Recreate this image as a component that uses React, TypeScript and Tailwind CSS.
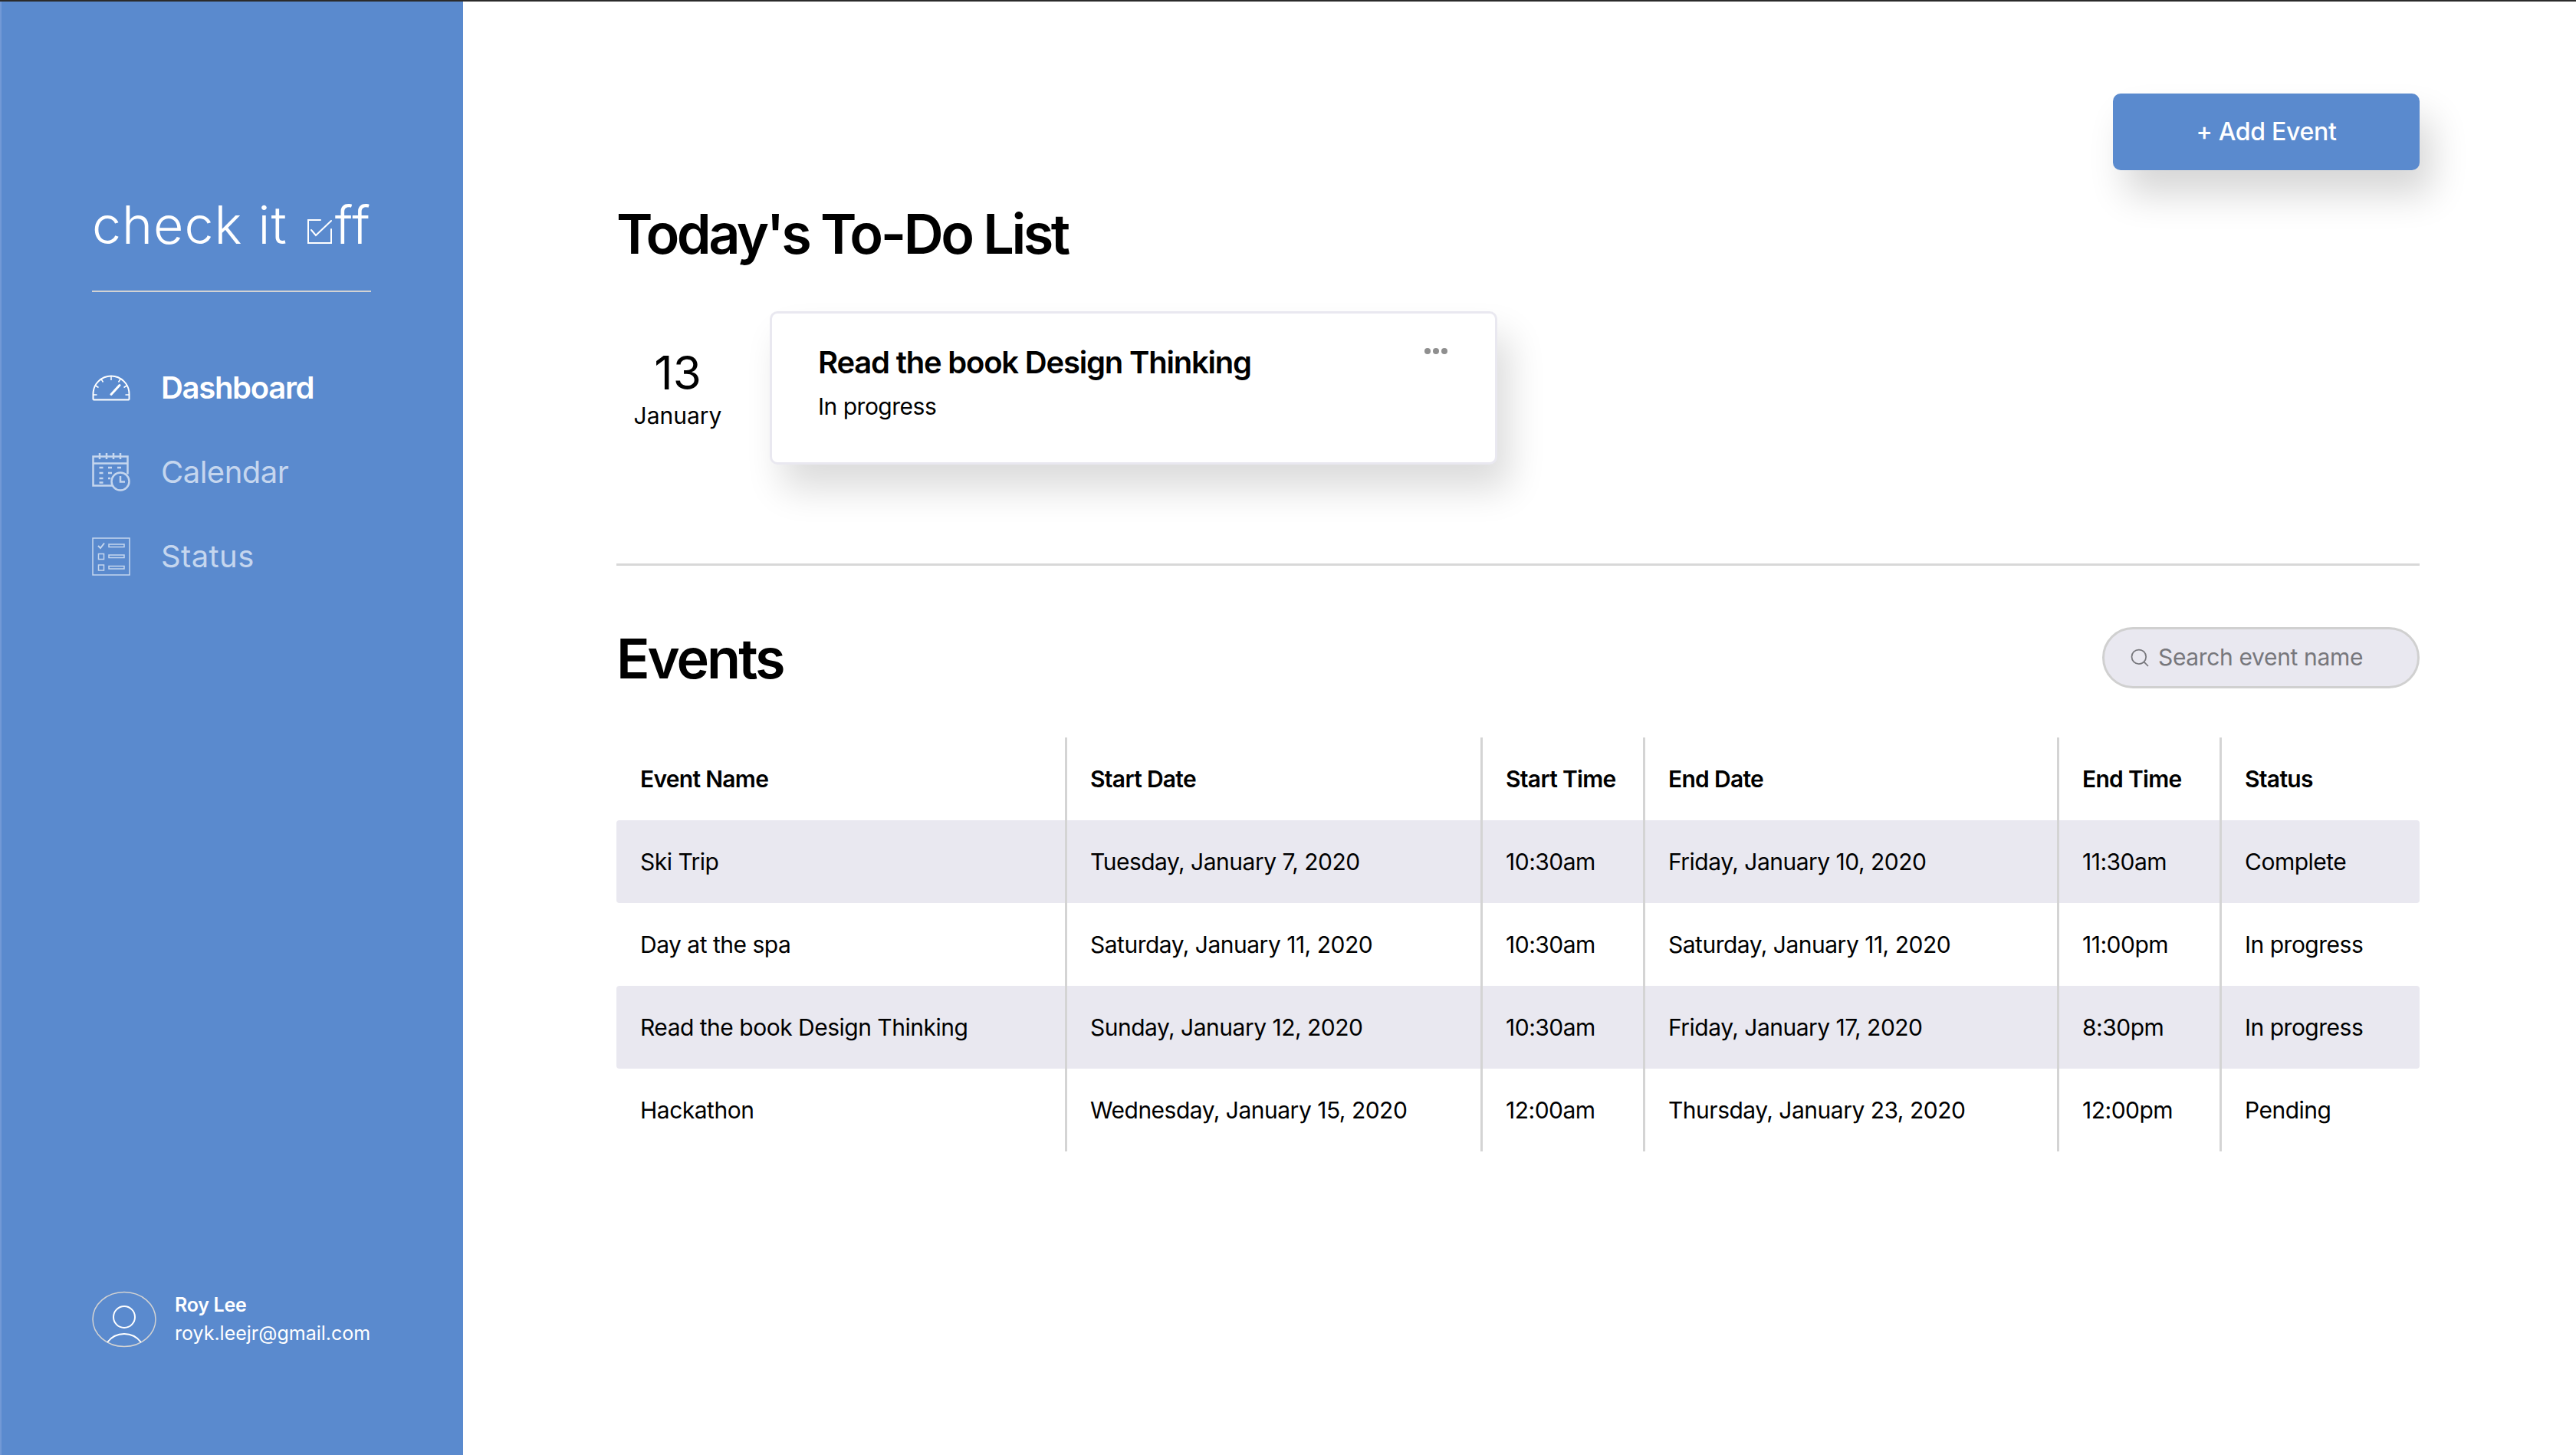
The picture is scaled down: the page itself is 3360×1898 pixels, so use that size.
import { Search } from "lucide-react";

type EventRow = {
  name: string;
  startDate: string;
  startTime: string;
  endDate: string;
  endTime: string;
  status: string;
};

const events: EventRow[] = [
  { name: "Ski Trip", startDate: "Tuesday, January 7, 2020", startTime: "10:30am", endDate: "Friday, January 10, 2020", endTime: "11:30am", status: "Complete" },
  { name: "Day at the spa", startDate: "Saturday, January 11, 2020", startTime: "10:30am", endDate: "Saturday, January 11, 2020", endTime: "11:00pm", status: "In progress" },
  { name: "Read the book Design Thinking", startDate: "Sunday, January 12, 2020", startTime: "10:30am", endDate: "Friday, January 17, 2020", endTime: "8:30pm", status: "In progress" },
  { name: "Hackathon", startDate: "Wednesday, January 15, 2020", startTime: "12:00am", endDate: "Thursday, January 23, 2020", endTime: "12:00pm", status: "Pending" },
];

const headers = ["Event Name", "Start Date", "Start Time", "End Date", "End Time", "Status"];

const GaugeIcon = () => (
  <svg viewBox="0 0 50 34" className="w-[50px] h-[34px]" fill="none" stroke="currentColor" strokeWidth="2">
    <path d="M1.500 32.500h47M1.500 32.500v-7.500a23.500 23.500 0 0 1 47 0v7.500" />
    <path d="M25 2v5M12 5.500l2.500 4M37 5.500l-2.500 4M4.500 14l4 2.500M45.500 14l-4 2.500M1.500 26h5M48.500 26h-5" strokeWidth="1.500" />
    <path d="M25 25.500 36 13.500" strokeWidth="3" strokeLinecap="round" />
  </svg>
);

const CalendarIcon = () => (
  <svg viewBox="0 0 50 50" className="w-[50px] h-[50px]" fill="none" stroke="currentColor" strokeWidth="2.500">
    <path d="M28 42.500H1.500V4.500h45v23" />
    <path d="M1.500 13.500h45" />
    <path d="M10 0v8M19 0v8M28 0v8M37 0v8" />
    <path d="M9.500 19h5M21 19h5M33 19h5M9.500 26h5M21 26h5M9.500 33h5M21 33h3M9.500 38.500h5" strokeWidth="2.500" />
    <circle cx="37" cy="37" r="11.500" fill="#5a8ace" />
    <path d="M37 30v7.500h6" />
  </svg>
);

const ChecklistIcon = () => (
  <svg viewBox="0 0 50 50" className="w-[50px] h-[50px]" fill="none" stroke="currentColor" strokeWidth="1.500">
    <rect x="1" y="1" width="48" height="48" />
    <path d="m8 11 3 3 5-6.500" strokeWidth="2" />
    <rect x="22" y="9" width="20" height="3.500" />
    <rect x="8.500" y="21.500" width="7" height="7" />
    <rect x="22" y="23" width="20" height="3.500" />
    <rect x="8.500" y="36" width="7" height="7" />
    <rect x="22" y="37.500" width="20" height="3.500" />
  </svg>
);

const AvatarIcon = () => (
  <svg viewBox="0 0 84 74" className="w-[84px] h-[74px] shrink-0" fill="none">
    <ellipse cx="42" cy="37" rx="41" ry="35.500" stroke="#d3d3d3" strokeWidth="1.500" />
    <circle cx="42" cy="34" r="14" stroke="#ffffff" strokeWidth="2" />
    <path d="M20 67c6-8 13-11 22-11s16 3 22 11" stroke="#ffffff" strokeWidth="2" />
  </svg>
);

const LogoBox = () => (
  <svg viewBox="0 0 33 33" className="w-[33px] h-[33px] ml-[25px] mr-[4px]" fill="none" stroke="#ffffff" strokeWidth="2" strokeLinecap="round">
    <path d="M18 2H2v30h30V14" />
    <path d="m6 15 6 7L32 3" />
  </svg>
);

const NavItem = ({ icon, label, className }: { icon: React.ReactNode; label: string; className: string }) => (
  <div className={`flex items-center h-[110px] gap-[40px] text-[40px] ${className}`}>
    <span className="w-[50px] flex justify-center">{icon}</span>
    <span>{label}</span>
  </div>
);

export default function App() {
  return (
    <div className="h-[1898px] overflow-hidden bg-white text-black font-['Inter',sans-serif] flex flex-col">
      <div className="h-[2px] bg-[#2b2b2b] shrink-0" />
      <div className="flex flex-1 min-h-0">
        {/* Sidebar */}
        <aside className="w-[604px] shrink-0 bg-[#5a8ace] border-l-2 border-[#7299d6] flex flex-col pl-[118px] pr-[118px]">
          <div className="pt-[249px] pb-[44px] border-b-2 border-[#d3d3d3] w-[364px]">
            <div className="flex h-[84px] items-baseline font-light text-[68px] leading-[84px] tracking-[1px] text-white whitespace-nowrap">
              <span>check it</span>
              <LogoBox />
              <span>ff</span>
            </div>
          </div>
          <nav className="mt-[70px]">
            <NavItem icon={<GaugeIcon />} label="Dashboard" className="text-white font-semibold tracking-[-1.3px]" />
            <NavItem icon={<CalendarIcon />} label="Calendar" className="text-[#c5d6ee] tracking-[-0.5px]" />
            <NavItem icon={<ChecklistIcon />} label="Status" className="text-[#c5d6ee] tracking-[0.4px]" />
          </nav>
          <div className="mt-auto mb-[140px] flex items-center gap-[24px] text-white whitespace-nowrap">
            <AvatarIcon />
            <div>
              <div className="text-[25px] leading-[37px] font-semibold tracking-[-0.3px]">Roy Lee</div>
              <div className="text-[25px] leading-[37px]">royk.leejr@gmail.com</div>
            </div>
          </div>
        </aside>

        {/* Main */}
        <main className="flex-1 min-w-0 pl-[200px] pr-[204px] pt-[120px]">
          <div className="flex justify-end">
            <button className="w-[400px] h-[100px] rounded-[10px] bg-[#5a8ace] text-white text-[32px] font-medium tracking-[-0.3px] shadow-[16px_32px_48px_rgba(0,0,0,0.16)]">
              + Add Event
            </button>
          </div>

          <h1 className="mt-[41px] text-[72px] leading-[84px] font-semibold tracking-[-3.500px] whitespace-nowrap">Today's To-Do List</h1>

          <div className="mt-[59px] flex items-center">
            <div className="w-[200px] shrink-0 pr-[40px] text-center">
              <div className="text-[60px] leading-[72px]">13</div>
              <div className="text-[30px] leading-[40px]">January</div>
            </div>
            <div className="w-[949px] h-[200px] rounded-[10px] border-[3px] border-[#e9e8f0] bg-white pl-[60px] pr-[62px] pt-[38px] flex justify-between items-start shadow-[16px_32px_48px_rgba(0,0,0,0.14)]">
              <div>
                <div className="text-[40px] leading-[52px] font-semibold tracking-[-1.2px]">Read the book Design Thinking</div>
                <div className="mt-[11px] text-[30px] leading-[40px] tracking-[-0.5px]">In progress</div>
              </div>
              <div className="flex gap-[3px] pt-[7px]">
                <span className="w-[8px] h-[8px] rounded-full bg-[#8f8f8f]" />
                <span className="w-[8px] h-[8px] rounded-full bg-[#8f8f8f]" />
                <span className="w-[8px] h-[8px] rounded-full bg-[#8f8f8f]" />
              </div>
            </div>
          </div>

          <div className="mt-[129px] h-[3px] bg-[#d8d8d8]" />

          <div className="mt-[79px] flex items-center justify-between">
            <h2 className="text-[72px] leading-[84px] font-semibold tracking-[-3px]">Events</h2>
            <div className="w-[414px] h-[80px] mb-[3px] rounded-full border-[3px] border-[#d0d0d0] bg-[#e9e8f0] flex items-center pl-[32px] gap-[10px] text-[#77777c]">
              <Search size={28} strokeWidth={1.5} />
              <span className="text-[30px] tracking-[-0.35px]">Search event name</span>
            </div>
          </div>

          <table className="mt-[61px] w-[2352px] table-fixed border-separate border-spacing-0 text-[30px] tracking-[-0.5px]">
            <colgroup>
              <col className="w-[588px]" />
              <col className="w-[542px]" />
              <col className="w-[212px]" />
              <col className="w-[540px]" />
              <col className="w-[212px]" />
              <col className="w-[258px]" />
            </colgroup>
            <thead>
              <tr className="h-[108px]">
                {headers.map((h, i) => (
                  <th key={h} className={`text-left font-semibold tracking-[-0.7px] ${i === 0 ? "pl-[31px]" : "pl-[30px]"} ${i < 5 ? "border-r-[3px] border-[#d4d4d4]" : ""}`}>
                    {h}
                  </th>
                ))}
              </tr>
            </thead>
            <tbody>
              {events.map((ev, idx) => (
                <tr key={ev.name} className="h-[108px]">
                  {[ev.name, ev.startDate, ev.startTime, ev.endDate, ev.endTime, ev.status].map((v, i) => (
                    <td
                      key={i}
                      className={`whitespace-nowrap ${i === 0 ? "pl-[31px] rounded-l-[4px]" : "pl-[30px]"} ${idx % 2 === 0 ? "bg-[#e9e8f0]" : ""} ${i < 5 ? "border-r-[3px] border-[#d4d4d4]" : ""} ${i === 5 ? "rounded-r-[4px]" : ""}`}
                    >
                      {v}
                    </td>
                  ))}
                </tr>
              ))}
            </tbody>
          </table>
        </main>
      </div>
    </div>
  );
}
